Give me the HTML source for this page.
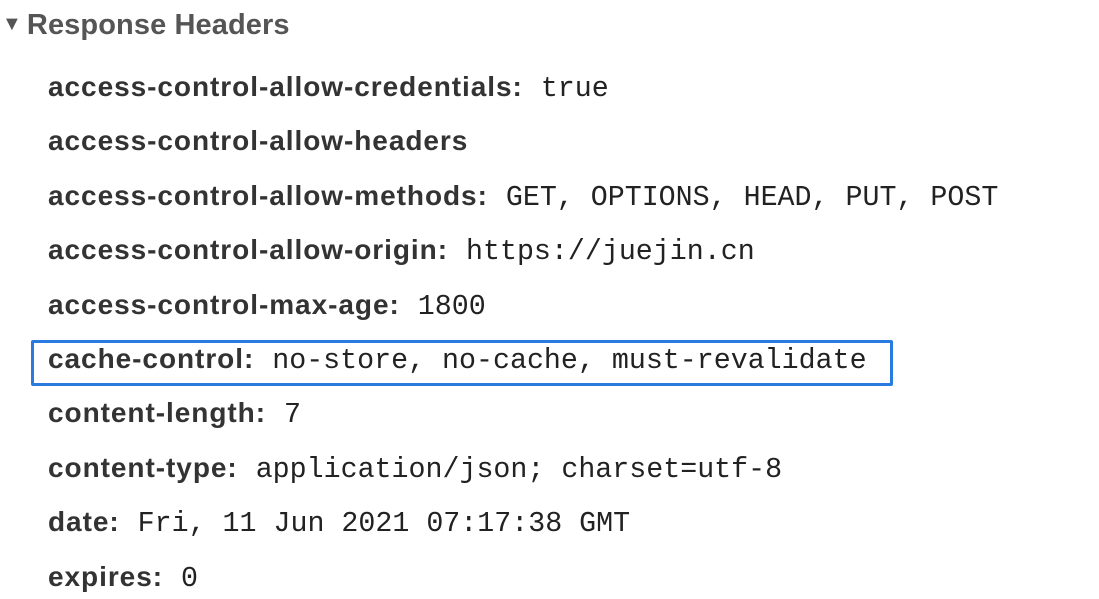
<!DOCTYPE html>
<html><head><meta charset="utf-8"><style>
html,body{margin:0;padding:0;background:#fff;width:1099px;height:599px;overflow:hidden;}
.h{position:absolute;left:2px;top:5px;font:bold 29px "Liberation Sans",sans-serif;color:#555;letter-spacing:0.1px;line-height:38px;}
.h .t{font-size:20px;vertical-align:4px;margin-right:5px;}
.r{position:absolute;left:48px;font:bold 28px "Liberation Sans",sans-serif;color:#333;letter-spacing:0.95px;line-height:36px;white-space:nowrap;}
.r .v{font:28.3px "Liberation Mono",monospace;letter-spacing:0;color:#222;font-weight:normal;margin-left:18px;}
.box{position:absolute;left:31px;top:340px;width:856px;height:40px;border:3px solid #2a7be0;border-radius:2px;}
</style></head><body>
<div class="h"><span class="t">▼</span>Response Headers</div>
<div class="r" style="top:69px">access-control-allow-credentials:<span class="v">true</span></div>
<div class="r" style="top:123px">access-control-allow-headers</div>
<div class="r" style="top:178px">access-control-allow-methods:<span class="v">GET, OPTIONS, HEAD, PUT, POST</span></div>
<div class="r" style="top:232px">access-control-allow-origin:<span class="v">https://juejin.cn</span></div>
<div class="r" style="top:287px">access-control-max-age:<span class="v">1800</span></div>
<div class="box"></div>
<div class="r" style="top:341px">cache-control:<span class="v">no-store, no-cache, must-revalidate</span></div>
<div class="r" style="top:395px">content-length:<span class="v">7</span></div>
<div class="r" style="top:450px">content-type:<span class="v">application/json; charset=utf-8</span></div>
<div class="r" style="top:504px">date:<span class="v">Fri, 11 Jun 2021 07:17:38 GMT</span></div>
<div class="r" style="top:559px">expires:<span class="v">0</span></div>
</body></html>
